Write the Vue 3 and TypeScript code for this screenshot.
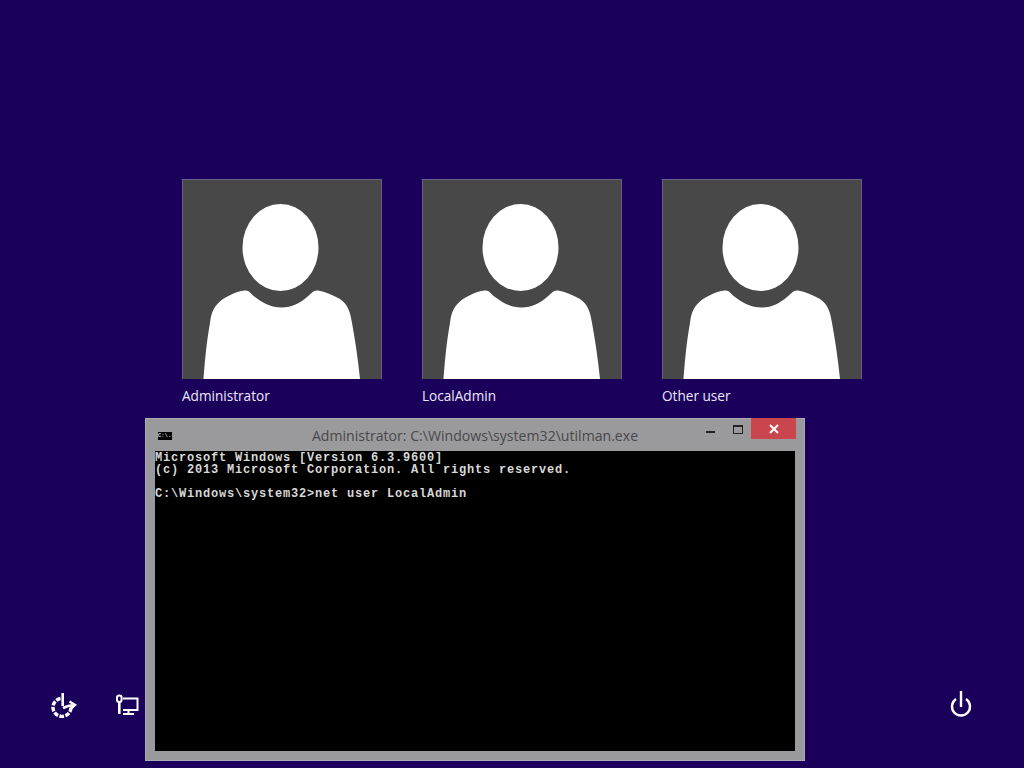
<script setup lang="ts">
const users: string[] = ['Administrator', 'LocalAdmin', 'Other user']
const consoleLines: string[] = [
  'Microsoft Windows [Version 6.3.9600]',
  '(c) 2013 Microsoft Corporation. All rights reserved.',
  '',
  'C:\\Windows\\system32>net user LocalAdmin',
]
</script>

<template>
  <main class="screen">
    <section class="users">
      <article v-for="user in users" :key="user" class="user">
        <div class="tile">
          <svg class="person" viewBox="0 0 198 198" aria-hidden="true">
            <ellipse cx="97.500" cy="66.500" rx="38" ry="43.500" fill="#fff" />
            <path
              fill="#fff"
              d="M20.500 198 C22 178 24 158 27 142 C28.500 130 31 125 40 118 C48 113 56 110 62 109.500 C66 109 68 113 72 116 C80 122 88 126.500 98.500 126.500 C109 126.500 117 122 124 116 C128 113 130 109 135 109.500 C142 110.500 150 114 157 118 C165 124 167 130 169 142 C172 158 175 178 177 198 Z"
            />
          </svg>
        </div>
        <div class="name">{{ user }}</div>
      </article>
    </section>

    <footer class="footer">
      <div class="footer-left">
        <svg class="icon ease" viewBox="0 0 28 28" aria-hidden="true">
          <path d="M10.500 7.500 A9 9 0 1 0 21 16.500" fill="none" stroke="#fff" stroke-width="3.400" stroke-dasharray="4.600 1.400" />
          <path d="M12.700 2 V15" fill="none" stroke="#fff" stroke-width="2.600" />
          <path d="M13 17 Q18 14.500 24 14" fill="none" stroke="#fff" stroke-width="2.600" />
          <path d="M19.500 10.500 L25 14 L20.500 18" fill="none" stroke="#fff" stroke-width="2.400" />
        </svg>
        <svg class="icon net" viewBox="0 0 24 24" aria-hidden="true">
          <rect x="1" y="2.500" width="4.600" height="6.500" rx="2.200" fill="none" stroke="#fff" stroke-width="2" />
          <path d="M3.300 9 V21" fill="none" stroke="#fff" stroke-width="2.600" />
          <path d="M7 5.500 H21.500 V17 H7 M12.500 17 V21 M7 21 H18" fill="none" stroke="#fff" stroke-width="2" />
        </svg>
      </div>
      <svg class="icon power" viewBox="0 0 28 28" aria-hidden="true">
        <path d="M9 8 A9 9 0 1 0 19 8" fill="none" stroke="#fff" stroke-width="2.400" />
        <path d="M14 0 V16" fill="none" stroke="#fff" stroke-width="2.400" />
      </svg>
    </footer>

    <div class="window">
      <header class="titlebar">
        <span class="cmd-icon">C:\.</span>
        <span class="title">Administrator: C:\Windows\system32\utilman.exe</span>
        <span class="controls">
          <span class="min"></span>
          <span class="max"></span>
          <span class="close">
            <svg viewBox="0 0 10 10" width="10" height="10" aria-hidden="true">
              <path d="M1 1 L9 9 M9 1 L1 9" stroke="#fff" stroke-width="2" />
            </svg>
          </span>
        </span>
      </header>
      <pre class="console"><template v-for="(line, i) in consoleLines" :key="i">{{ line }}
</template></pre>
    </div>
  </main>
</template>

<style>
html,
body {
  margin: 0;
  background: #1a005a;
}
</style>

<style scoped>
.screen {
  position: relative;
  width: 1024px;
  height: 768px;
  overflow: hidden;
  display: flex;
  flex-direction: column;
  justify-content: space-between;
  background: #1a005a;
  font-family: "Open Sans", "Noto Sans", sans-serif;
}
.users {
  display: flex;
  gap: 40px;
  padding: 179px 0 0 182px;
}
.user {
  width: 200px;
}
.tile {
  box-sizing: border-box;
  width: 200px;
  height: 200px;
  background: #484848;
  border: 1px solid #6a5f86;
  border-bottom: 0;
  display: flex;
}
.person {
  width: 198px;
  height: 198px;
  margin-top: 1px;
  display: block;
}
.name {
  margin-top: 7px;
  color: #ece6fb;
  font-size: 13.600px;
  line-height: 20px;
}
.footer {
  display: flex;
  justify-content: space-between;
  align-items: center;
  padding: 0 49px 49px 50px;
}
.footer-left {
  display: flex;
  align-items: center;
  gap: 38px;
}
.icon {
  display: block;
  width: 28px;
  height: 28px;
  overflow: visible;
}
.net {
  width: 24px;
  height: 24px;
}
.window {
  position: absolute;
  left: 145px;
  top: 418px;
  box-sizing: border-box;
  width: 660px;
  height: 343px;
  background: #9a9a9c;
  border: 1px solid #aaa9b4;
  padding: 0 9px 9px;
  display: flex;
  flex-direction: column;
}
.titlebar {
  position: relative;
  height: 32px;
  flex: none;
  display: flex;
  align-items: center;
  justify-content: center;
}
.title {
  color: #48484b;
  font-size: 14.100px;
  padding-top: 1px;
}
.cmd-icon {
  position: absolute;
  left: 3px;
  top: 13px;
  width: 14px;
  height: 8px;
  background: #000;
  color: #ddd;
  font: bold 5.500px/8px "Liberation Mono", monospace;
  white-space: nowrap;
}
.controls {
  position: absolute;
  top: -1px;
  right: -1px;
  display: flex;
  align-items: flex-start;
}
.min {
  width: 9px;
  height: 2px;
  background: #222;
  margin: 13px 18px 0 0;
}
.max {
  box-sizing: border-box;
  width: 10px;
  height: 9px;
  border: 1px solid #222;
  border-top-width: 2px;
  margin: 7px 8px 0 0;
}
.close {
  width: 45px;
  height: 21px;
  background: #c9464f;
  display: flex;
  align-items: center;
  justify-content: center;
}
.console {
  flex: 1;
  margin: 0;
  background: #000;
  color: #d8d8d8;
  font: bold 12px/12px "Liberation Mono", "DejaVu Sans Mono", monospace;
  letter-spacing: 0.800px;
  padding: 1px 0 0 0;
  white-space: pre;
}
</style>
